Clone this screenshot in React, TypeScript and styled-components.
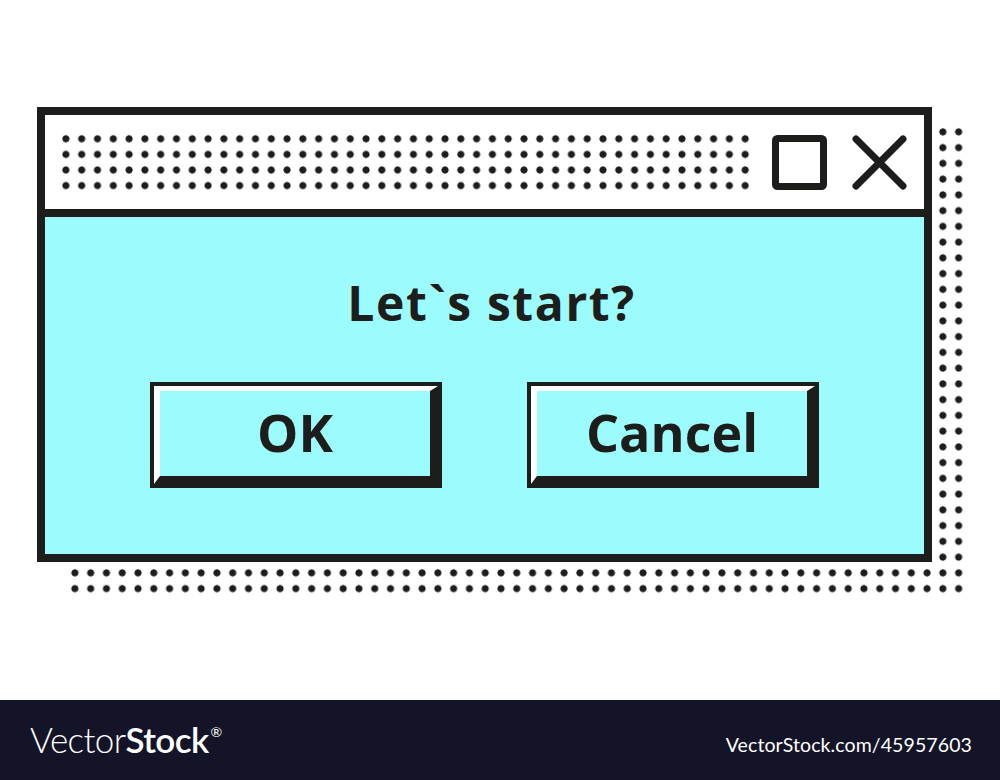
import styled, { createGlobalStyle } from "styled-components";

const ink = "#1d1d1b";
const aqua = "#9cfcfd";

const GlobalStyle = createGlobalStyle`
  html, body {
    margin: 0;
    padding: 0;
    background: #ffffff;
  }
  body {
    font-family: "Open Sans", "DejaVu Sans", sans-serif;
  }
`;

const Page = styled.div`
  width: 1000px;
  height: 780px;
  display: flex;
  flex-direction: column;
  overflow: hidden;
`;

const Stage = styled.main`
  height: 700px;
  padding: 107px 0 0 37px;
  box-sizing: border-box;
  isolation: isolate;
`;

// dotted drop shadow sits behind the dialog
const Frame = styled.div`
  position: relative;
  width: 895px;

  &::before {
    content: "";
    position: absolute;
    left: 30.1px;
    top: 17.1px;
    width: 900px;
    height: 472.8px;
    z-index: -1;
    background-image: radial-gradient(circle, ${ink} 3.2px, transparent 3.9px);
    background-size: 15.79px 15.76px;
  }
`;

const Window = styled.section`
  border: 8px solid ${ink};
  background: ${aqua};
  display: flex;
  flex-direction: column;
`;

const TitleBar = styled.header`
  height: 94px;
  background: #ffffff;
  border-bottom: 8px solid ${ink};
  display: flex;
  align-items: center;
  padding: 0 17px 0 13px;
`;

const DotGrip = styled.div`
  width: 695.2px;
  height: 62.4px;
  background-image: radial-gradient(circle, ${ink} 3.2px, transparent 3.9px);
  background-size: 15.8px 15.6px;
`;

const Controls = styled.div`
  margin-left: auto;
  display: flex;
  gap: 25px;
`;

const ControlButton = styled.button`
  width: 55px;
  height: 55px;
  padding: 0;
  border: none;
  background: none;
  display: block;
  cursor: pointer;

  svg {
    display: block;
  }
`;

const Body = styled.div`
  height: 337px;
  padding-top: 62px;
  box-sizing: border-box;
  display: flex;
  flex-direction: column;
  align-items: center;
`;

const Prompt = styled.h1`
  margin: 0 0 59px;
  padding-left: 14px;
  font-family: "Open Sans", "DejaVu Sans", sans-serif;
  font-weight: 700;
  font-size: 48px;
  line-height: 1;
  color: ${ink};
  letter-spacing: 1.6px;
  white-space: pre;
`;

const Actions = styled.div`
  display: flex;
  gap: 93px;
`;

const BevelButton = styled.button`
  width: 284px;
  height: 98px;
  box-sizing: border-box;
  border-style: solid;
  border-width: 5px 8px 8px 6px;
  border-color: #ffffff ${ink} ${ink} #ffffff;
  box-shadow: 0 0 0 4px ${ink};
  background: ${aqua};
  display: flex;
  align-items: center;
  justify-content: center;
  padding: 0 0 3px;
  font-family: "Open Sans", "DejaVu Sans", sans-serif;
  font-weight: 700;
  font-size: 52px;
  line-height: 1;
  color: ${ink};
  cursor: pointer;
`;

const Footer = styled.footer`
  height: 80px;
  background: #131428;
  display: flex;
  align-items: center;
  justify-content: space-between;
  padding: 0 28px 0 30px;
  color: #ffffff;
  font-family: Lato, "Open Sans", sans-serif;
`;

const Logo = styled.div`
  font-size: 35px;
  line-height: 1;
  letter-spacing: -0.6px;
  margin-top: -2px;
`;

const LogoLight = styled.span`
  font-weight: 300;
`;

const LogoBold = styled.span`
  font-weight: 600;
`;

const Registered = styled.sup`
  font-size: 14px;
  font-weight: 400;
  vertical-align: 16px;
  margin-left: 2px;
`;

const Ref = styled.div`
  font-size: 19.5px;
  line-height: 1;
  margin-top: 10px;
  letter-spacing: 0.1px;
`;

export default function App() {
  return (
    <Page>
      <GlobalStyle />
      <Stage>
        <Frame>
          <Window>
            <TitleBar>
              <DotGrip />
              <Controls>
                <ControlButton aria-label="Maximize">
                  <svg width="55" height="55" viewBox="0 0 55 55">
                    <rect
                      x="3.5"
                      y="3.5"
                      width="48"
                      height="48"
                      rx="2"
                      fill="none"
                      stroke={ink}
                      strokeWidth="7"
                    />
                  </svg>
                </ControlButton>
                <ControlButton aria-label="Close">
                  <svg width="55" height="55" viewBox="0 0 55 55">
                    <path
                      d="M4 4 L51 51 M51 4 L4 51"
                      stroke={ink}
                      strokeWidth="7"
                      strokeLinecap="round"
                    />
                  </svg>
                </ControlButton>
              </Controls>
            </TitleBar>
            <Body>
              <Prompt>Let`s start?</Prompt>
              <Actions>
                <BevelButton>OK</BevelButton>
                <BevelButton>Cancel</BevelButton>
              </Actions>
            </Body>
          </Window>
        </Frame>
      </Stage>
      <Footer>
        <Logo>
          <LogoLight>Vector</LogoLight>
          <LogoBold>Stock</LogoBold>
          <Registered>®</Registered>
        </Logo>
        <Ref>VectorStock.com/45957603</Ref>
      </Footer>
    </Page>
  );
}
